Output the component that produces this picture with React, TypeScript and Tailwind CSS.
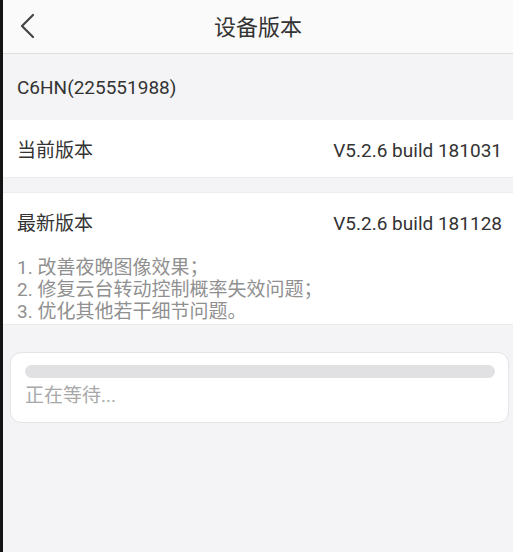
import React from 'react';

const font = { fontFamily: 'Roboto, "Noto Sans CJK SC", sans-serif' };

const notes = ['1. 改善夜晚图像效果；', '2. 修复云台转动控制概率失效问题；', '3. 优化其他若干细节问题。'];

export default function App() {
    return (
        <div className="flex w-[513px] h-[552px] overflow-hidden bg-[#f4f4f6]" style={font}>
            {/* dark edge of the captured screen */}
            <div className="w-[3px] shrink-0 bg-[#141414]" />

            <div className="flex flex-1 flex-col">
                <header className="relative flex h-[54px] shrink-0 items-center justify-center border-b border-[#dedede] bg-[#fafafa]">
                    <button className="absolute left-[14px] top-[12px] flex h-[28px] w-[20px] items-center justify-center text-[#444]">
                        <svg width="16" height="26" viewBox="0 0 16 26" fill="none">
                            <path d="M14 2 L3 13 L14 24" stroke="currentColor" strokeWidth="2.2" strokeLinecap="round" strokeLinejoin="round" />
                        </svg>
                    </button>
                    <h1 className="pt-[3px] text-[22px] leading-none text-[#333]">设备版本</h1>
                </header>

                <div className="flex h-[66px] items-center pl-[14px] pt-[2px] text-[19px] text-[#333]">
                    C6HN(225551988)
                </div>

                <div className="flex h-[58px] items-center justify-between border-b border-[#ececec] bg-white pl-[14px] pr-[11px] pt-[5px] text-[19px] text-[#333]">
                    <span>当前版本</span>
                    <span>V5.2.6 build 181031</span>
                </div>

                <div className="mt-[14px] border-y border-[#ececec] bg-white pl-[14px] pr-[11px] pt-[18px] pb-[1px]">
                    <div className="flex items-center justify-between text-[19px] leading-[26px] text-[#333]">
                        <span>最新版本</span>
                        <span>V5.2.6 build 181128</span>
                    </div>
                    <ul className="mt-[20px] text-[19px] leading-[22px] text-[#909090]">
                        {notes.map((n) => (
                            <li key={n}>{n}</li>
                        ))}
                    </ul>
                </div>

                <div className="ml-[7px] mr-[4px] mt-[27px] rounded-[11px] border border-[#e4e4e6] bg-white pl-[14px] pr-[13px] pt-[12px] pb-[13px]">
                    <div className="h-[13px] rounded-full bg-[#e1e1e3]" />
                    <p className="mt-[5px] text-[19px] leading-[26px] text-[#a8a8a8]">正在等待...</p>
                </div>
            </div>
        </div>
    );
}
